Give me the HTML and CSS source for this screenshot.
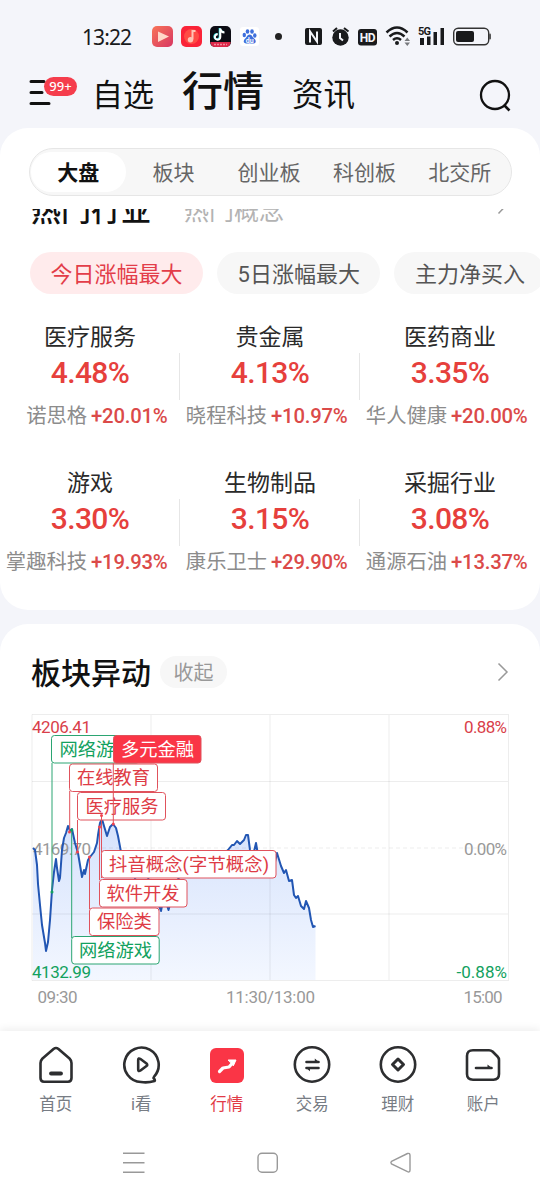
FILE: index.html
```html
<!DOCTYPE html>
<html lang="zh-CN">
<head>
    <meta charset="UTF-8">
    <meta name="viewport" content="width=device-width, initial-scale=1.0">
    <title>行情</title>
    <link rel="stylesheet" href="styles.css">
</head>
<body>
    <div class="status-bar">
        <span class="clock">13:22</span>
        <svg class="app-icons" width="130" height="24" viewBox="152 25 130 24">
            <defs>
                <linearGradient id="play-bg" x1="0" y1="0" x2="1" y2="1">
                    <stop offset="0" stop-color="#f87558"/>
                    <stop offset="1" stop-color="#d73662"/>
                </linearGradient>
            </defs>
            <rect x="152" y="26" width="21" height="21" rx="5" fill="url(#play-bg)"/>
            <path d="M158 31.5 L169 36.5 L158 42 Z" fill="#ffd8c9"/>
            <rect x="181" y="26" width="21" height="21" rx="5" fill="#fa2338"/>
            <circle cx="191.500" cy="36.500" r="7.500" fill="#ff4b45"/>
            <path d="M195.500 31 H192.500 V39.500" fill="none" stroke="#ffc3b5" stroke-width="2"/>
            <circle cx="190.500" cy="39.800" r="2.700" fill="#ffc3b5"/>
            <rect x="210" y="26" width="21" height="21" rx="5" fill="#0c0c14"/>
            <path d="M210.300 42 H230.700 Q230 47 226 47 H215 Q211 47 210.300 42" fill="#dc2749"/>
            <path d="M214 44.500 H227" stroke="#f08c9c" stroke-width="1.500" stroke-dasharray="2 1"/>
            <path d="M220.300 28.500 V37 A2.700 2.700 0 1 1 217.800 34.300 M220.300 29 Q221 32.300 224.500 32.500" fill="none" stroke="#35e3e3" stroke-width="2" transform="translate(-.6 -.4)"/>
            <path d="M220.300 28.500 V37 A2.700 2.700 0 1 1 217.800 34.300 M220.300 29 Q221 32.300 224.500 32.500" fill="none" stroke="#fff" stroke-width="2"/>
            <rect x="240" y="27" width="19" height="19" rx="3" fill="#fff"/>
            <g fill="#3f70dc">
                <ellipse cx="244.300" cy="35" rx="1.700" ry="2.300"/>
                <ellipse cx="247.500" cy="31.500" rx="1.800" ry="2.300"/>
                <ellipse cx="252" cy="31.500" rx="1.800" ry="2.300"/>
                <ellipse cx="254.800" cy="35.500" rx="1.700" ry="2.300"/>
                <path d="M249.700 34.500 C252 34.500 252.500 37.500 255 39.300 C257.500 43.500 253 44 249.700 43.300 C246 44 242 43.300 244.500 39.300 C247 37.500 247 34.500 249.700 34.500"/>
            </g>
            <text x="249.700" y="42.500" class="paw-text">du</text>
            <circle cx="278.500" cy="36.500" r="3.500" fill="#222"/>
        </svg>
        <svg class="system-icons" width="188" height="26" viewBox="304 23 188 26">
            <g fill="#191a1c">
                <rect x="305" y="28" width="17" height="17" rx="2"/>
                <circle cx="340.500" cy="37.500" r="8.200"/>
                <rect x="358" y="29" width="19" height="16.500" rx="3"/>
                <circle cx="397" cy="43" r="2"/>
                <rect x="420" y="38" width="4" height="7"/>
                <rect x="427" y="36.500" width="3.500" height="8.500"/>
                <rect x="433.500" y="32" width="3.500" height="13"/>
                <rect x="440.500" y="28" width="3.500" height="17"/>
                <rect x="456" y="31" width="18" height="11" rx="2"/>
            </g>
            <path d="M310 42.500 V31.500 L317 41.500 V31.500" fill="none" stroke="#f4f5fa" stroke-width="2"/>
            <path d="M340 33 V38 L343 40.500" fill="none" stroke="#f4f5fa" stroke-width="2"/>
            <path d="M333 31.500 L337 28 M344 28 L348.500 31.500" stroke="#191a1c" stroke-width="2"/>
            <text x="367.500" y="41.500" class="hd-text">HD</text>
            <path d="M386.500 32.500 Q397 22.500 407.500 32.500 M389.500 36.500 Q397 29.500 404.500 36.500 M393 40 Q397 36.500 401 40" fill="none" stroke="#191a1c" stroke-width="2.500"/>
            <path d="M404.500 41 L407.300 37.500 L410 41 Z M404.500 42.500 L407.300 46 L410 42.500 Z" fill="#77797d"/>
            <text x="418" y="35" class="net-text">5G</text>
            <rect x="453.700" y="28.200" width="35" height="16.500" rx="4.500" fill="none" stroke="#333" stroke-width="1.400"/>
            <rect x="489" y="33.500" width="2" height="6" rx="1" fill="#555"/>
        </svg>
    </div>

    <header class="top-nav">
        <div class="menu">
            <svg width="24" height="28" viewBox="0 0 24 28">
                <path d="M2 3.500 H15 M2 14.500 H13 M2 25.500 H20" stroke="#111" stroke-width="3" stroke-linecap="round"/>
            </svg>
            <span class="badge">99+</span>
        </div>
        <a class="nav-link">自选</a>
        <a class="nav-link current">行情</a>
        <a class="nav-link last">资讯</a>
        <svg class="search" width="34" height="34" viewBox="0 0 34 34">
            <circle cx="17" cy="16" r="14" fill="none" stroke="#111" stroke-width="2.300"/>
            <path d="M26.500 26.500 L31.500 31.500" stroke="#111" stroke-width="2.600"/>
        </svg>
    </header>

    <section class="card market">
        <div class="segments">
            <span class="segment active">大盘</span>
            <span class="segment">板块</span>
            <span class="segment">创业板</span>
            <span class="segment">科创板</span>
            <span class="segment">北交所</span>
        </div>

        <div class="scrolled-head">
            <span class="hot">热门行业</span>
            <span class="hot-other">热门概念</span>
            <svg class="head-arrow" width="12" height="20" viewBox="0 0 12 20">
                <path d="M1.500 1.500 L9.500 10 L1.500 18.500" fill="none" stroke="#999" stroke-width="1.500"/>
            </svg>
        </div>

        <div class="filters">
            <span class="filter active">今日涨幅最大</span>
            <span class="filter">5日涨幅最大</span>
            <span class="filter">主力净买入</span>
        </div>

        <div class="sectors">
            <div class="sector">
                <div class="name">医疗服务</div>
                <div class="percent">4.48%</div>
                <div class="leader"><span>诺思格</span><b>+20.01%</b></div>
            </div>
            <div class="sector">
                <div class="name">贵金属</div>
                <div class="percent">4.13%</div>
                <div class="leader"><span>晓程科技</span><b>+10.97%</b></div>
            </div>
            <div class="sector">
                <div class="name">医药商业</div>
                <div class="percent">3.35%</div>
                <div class="leader"><span>华人健康</span><b>+20.00%</b></div>
            </div>
            <div class="sector">
                <div class="name">游戏</div>
                <div class="percent">3.30%</div>
                <div class="leader"><span>掌趣科技</span><b>+19.93%</b></div>
            </div>
            <div class="sector">
                <div class="name">生物制品</div>
                <div class="percent">3.15%</div>
                <div class="leader"><span>康乐卫士</span><b>+29.90%</b></div>
            </div>
            <div class="sector">
                <div class="name">采掘行业</div>
                <div class="percent">3.08%</div>
                <div class="leader"><span>通源石油</span><b>+13.37%</b></div>
            </div>
        </div>
    </section>

    <section class="card moves">
        <div class="moves-head">
            <h2>板块异动</h2>
            <span class="fold">收起</span>
            <svg class="head-arrow" width="12" height="20" viewBox="0 0 12 20">
                <path d="M1.500 1.500 L10 10 L1.500 18.500" fill="none" stroke="#999" stroke-width="1.500"/>
            </svg>
        </div>
        <svg class="chart" width="540" height="300" viewBox="0 710 540 300">
            <defs>
                <linearGradient id="area" x1="0" y1="0" x2="0" y2="1">
                    <stop offset="0" stop-color="#d5e2fc"/>
                    <stop offset="1" stop-color="#f3f7ff"/>
                </linearGradient>
            </defs>
            <path fill="url(#area)" d="M33 848 L35 850 L37 865 L38 884 L40 905 L42 925 L45 943 L46 951 L48 942 L50 920 L52 890 L54 872 L56 859 L57 868 L59 881 L60 878 L62 850 L64 838 L66 833 L68 826 L70 831 L72 829 L75 843 L78 853 L80 865 L82 877 L84 870 L85 874 L88 860 L90 857 L94 852 L97 843 L98 835 L100 823 L102 819 L104 826 L107 836 L110 827 L113 824 L116 828 L118 836 L121 852 L135 878 L145 870 L161 911 L164 895 L168.500 910 L175 885 L193 851 L210 865 L228 850 L232 845 L234 845 L237 841 L240 844 L244 840 L246 835 L248 835 L250 850 L252 860 L256 843 L258 855 L265 865 L275 862 L277 853 L281 866 L284 873 L286 870 L289 881 L292 880 L294 895 L296 898 L298 896 L301 906 L304 909 L306 901 L309 908 L311 920 L313 927 L315.500 926 V980 H33 Z"/>
            <g class="grid">
                <path d="M32 714.500 H508.500 V980.500 H32 Z"/>
                <path d="M32 781.500 H508 M32 914 H508 M151 715 V980 M270 715 V980 M389 715 V980"/>
                <path d="M32 848 H508" stroke-dasharray="4 3"/>
            </g>
            <g class="axis">
                <text x="32" y="733" textLength="59" class="up">4206.41</text>
                <text x="33" y="855" textLength="58">4169.70</text>
                <text x="32" y="978" textLength="59" class="down">4132.99</text>
                <text x="464" y="733" textLength="43">0.88%</text>
                <text x="464" y="855" textLength="43">0.00%</text>
                <text x="456.500" y="978" textLength="50.500" class="down">-0.88%</text>
                <text x="37.500" y="1003" textLength="40">09:30</text>
                <text x="226" y="1003" textLength="89">11:30/13:00</text>
                <text x="463.500" y="1003" textLength="39">15:00</text>
            </g>
            <path class="index-line" d="M33 848 L35 850 L37 865 L38 884 L40 905 L42 925 L45 943 L46 951 L48 942 L50 920 L52 890 L54 872 L56 859 L57 868 L59 881 L60 878 L62 850 L64 838 L66 833 L68 826 L70 831 L72 829 L75 843 L78 853 L80 865 L82 877 L84 870 L85 874 L88 860 L90 857 L94 852 L97 843 L98 835 L100 823 L102 819 L104 826 L107 836 L110 827 L113 824 L116 828 L118 836 L121 852 L135 878 L145 870 L161 911 L164 895 L168.500 910 L175 885 L193 851 L210 865 L228 850 L232 845 L234 845 L237 841 L240 844 L244 840 L246 835 L248 835 L250 850 L252 860 L256 843 L258 855 L265 865 L275 862 L277 853 L281 866 L284 873 L286 870 L289 881 L292 880 L294 895 L296 898 L298 896 L301 906 L304 909 L306 901 L309 908 L311 920 L313 927 L315.500 926"/>

            <!-- sector tags, drawn back to front -->
            <g class="tag fall">
                <path d="M52 763 V892"/>
                <rect x="51.500" y="735.500" width="88" height="27.500" rx="3"/>
                <text x="59.500" y="755.500">网络游戏</text>
            </g>
            <g class="tag rise">
                <path d="M69.700 791 V832"/>
                <rect x="69.500" y="764" width="88" height="27.500" rx="3"/>
                <text x="77" y="784">在线教育</text>
            </g>
            <g class="tag rise">
                <path d="M77.500 820 V852"/>
                <rect x="77.500" y="792.500" width="88" height="27.500" rx="3"/>
                <text x="85.500" y="812.500">医疗服务</text>
            </g>
            <g class="tag rise">
                <path d="M101.500 878 V815"/>
                <rect x="101.500" y="850.500" width="174.500" height="27.500" rx="3"/>
                <text x="109" y="871" textLength="160">抖音概念(字节概念)</text>
            </g>
            <g class="tag rise">
                <path d="M99.500 880 V827"/>
                <rect x="99.500" y="879.500" width="87.500" height="27.500" rx="3"/>
                <text x="106.500" y="899.500">软件开发</text>
            </g>
            <g class="tag rise">
                <path d="M89.500 909 V857"/>
                <rect x="89.500" y="908" width="69.500" height="27.500" rx="3"/>
                <text x="97" y="928">保险类</text>
            </g>
            <g class="tag fall">
                <path d="M71.700 938 V830"/>
                <rect x="71.700" y="936.500" width="87.500" height="27.500" rx="3"/>
                <text x="79" y="956.500">网络游戏</text>
            </g>
            <g class="tag solid">
                <path d="M113.300 763 V825"/>
                <rect x="113.500" y="735.500" width="87.500" height="27.500" rx="3"/>
                <text x="121" y="755.500">多元金融</text>
            </g>
            <g fill="#f2444f">
                <circle cx="69.500" cy="832" r="1.500"/>
                <circle cx="77.500" cy="852" r="1.500"/>
                <circle cx="89.500" cy="857" r="1.500"/>
                <circle cx="99.500" cy="827" r="1.500"/>
                <circle cx="101.500" cy="815.500" r="1.500"/>
                <circle cx="113.300" cy="824" r="1.500"/>
            </g>
            <g fill="#12a15e">
                <circle cx="52" cy="892" r="1.500"/>
                <circle cx="71.700" cy="830" r="1.500"/>
            </g>
        </svg>
    </section>

    <footer class="bottom">
        <nav class="tabs">
            <a class="tab">
                <svg width="40" height="40" viewBox="0 0 40 40">
                    <path d="M17.500 4 Q20 2 22.500 4 L33.500 13.500 Q35.500 15.500 35.500 18 V33 Q35.500 36.700 32 36.700 H8 Q4.500 36.700 4.500 33 V18 Q4.500 15.500 6.500 13.500 Z"/>
                    <path d="M15 28.500 H25" stroke-width="3.800"/>
                </svg>
                首页
            </a>
            <a class="tab">
                <svg width="40" height="40" viewBox="0 0 40 40">
                    <path d="M33.300 31.300 A17.200 17.200 0 1 0 20 37 Q27 38 33.500 36 Q34.500 35 32.500 33 Z"/>
                    <path d="M17.200 15 Q17.200 12.500 19.500 14 L25.500 18.500 Q27 20 25.500 21 L19.500 25.500 Q17.200 27 17.200 24.500 Z"/>
                </svg>
                i看
            </a>
            <a class="tab active">
                <svg width="40" height="40" viewBox="0 0 40 40">
                    <rect x="3" y="3" width="34" height="35" rx="6" fill="#fa3546" stroke="none"/>
                    <path d="M12.500 26.500 L16 23 L22 22 L26 17.500" stroke="#fff" stroke-width="3.200"/>
                    <path d="M21.500 15 L29 15 L26.500 20.500 Z" fill="#fff" stroke="#fff" stroke-width="1"/>
                </svg>
                行情
            </a>
            <a class="tab">
                <svg width="40" height="40" viewBox="0 0 40 40">
                    <circle cx="20" cy="19.500" r="17.200"/>
                    <path d="M14.500 17 H26.500 M14.500 23 H26.500" stroke-width="2.600"/>
                    <path d="M22.800 13.500 L27.500 17.500 H22.800 Z M18 26.300 L13.500 22.500 H18 Z" fill="#2d2e30" stroke="none"/>
                </svg>
                交易
            </a>
            <a class="tab">
                <svg width="40" height="40" viewBox="0 0 40 40">
                    <circle cx="20" cy="19.500" r="17.200"/>
                    <path d="M20 14 L25.500 19.500 L20 25 L14.500 19.500 Z" stroke-width="3"/>
                </svg>
                理财
            </a>
            <a class="tab">
                <svg width="40" height="40" viewBox="0 0 40 40">
                    <path d="M10 5.200 H26 Q28 5.200 29.500 6.500 L34.500 11.500 Q36 13 36 15 V29 Q36 34.700 30.500 34.700 H10 Q4 34.700 4 29 V11 Q4 5.200 10 5.200"/>
                    <path d="M13 23 H28.500" stroke-width="2.600"/>
                    <path d="M24.500 19.500 L29.500 23.500 H24.500 Z" fill="#2d2e30" stroke="none"/>
                </svg>
                账户
            </a>
        </nav>
        <svg class="system-nav" width="290" height="24" viewBox="122 1151 290 24">
            <path d="M123 1153.300 H144.500 M123 1162.700 H144.500 M123 1172.200 H144.500"/>
            <rect x="258" y="1153.300" width="19.300" height="19" rx="4"/>
            <path d="M391.500 1161.300 L407.500 1153.500 Q410 1152.800 410 1155.500 V1170 Q410 1172.700 407.500 1171.700 L391.500 1164 Q390.300 1162.500 391.500 1161.300 Z"/>
        </svg>
    </footer>
</body>
</html>
```
FILE: styles.css
```css
* {
    box-sizing: border-box;
}
body {
    margin: 0;
    width: 540px;
    height: 1200px;
    overflow: hidden;
    display: flex;
    flex-direction: column;
    background: #f4f5fa;
    color: #111;
    font-family: Roboto, "Noto Sans CJK SC", sans-serif;
}
svg {
    display: block;
    flex: none;
}
.status-bar {
    height: 62px;
    display: flex;
    align-items: center;
    padding: 12px 0 0 82px;
}
.clock {
    width: 70px;
    font: 21px/24px "Noto Sans", sans-serif;
    letter-spacing: -0.9px;
    color: #191a1c;
}
.system-icons {
    margin: -2px 0 0 22px;
}
.paw-text {
    font: bold 7px Roboto, sans-serif;
    fill: #fff;
    text-anchor: middle;
}
.hd-text {
    font: bold 12px Roboto, sans-serif;
    letter-spacing: -0.5px;
    fill: #f4f5fa;
    text-anchor: middle;
}
.net-text {
    font: bold 11px Roboto, sans-serif;
    letter-spacing: -0.8px;
    fill: #191a1c;
}

/* top navigation */
.top-nav {
    height: 66px;
    display: flex;
    align-items: center;
    padding: 2px 28px 0 29px;
}
.menu {
    position: relative;
    width: 63px;
    margin-top: -9px;
}
.badge {
    position: absolute;
    left: 15px;
    top: -1px;
    width: 33px;
    height: 19px;
    border-radius: 10px;
    background: #f53d4c;
    color: #fff;
    font: 500 13px/19px "Noto Sans", sans-serif;
    text-align: center;
}
.nav-link {
    font-size: 31px;
    line-height: 40px;
    margin-right: 28px;
}
.nav-link.current {
    font-size: 41px;
    font-weight: 500;
    line-height: 60px;
    margin-top: -8px;
}
.nav-link.last {
    margin-right: auto;
    font-size: 31.5px;
}

.card {
    background: #fff;
    border-radius: 28px;
}
.market {
    height: 482px;
    margin-bottom: 14px;
    padding-top: 20px;
    overflow: hidden;
}
.segments {
    width: 483px;
    height: 48px;
    margin: 0 auto 0 28.5px;
    padding: 3px 3px 3px 1px;
    display: flex;
    border: 1px solid #e6e6e6;
    border-radius: 24px;
    background: #f7f7f7;
}
.segment {
    flex: 1;
    padding-top: 1.5px;
    font-size: 21px;
    line-height: 39px;
    text-align: center;
    color: #666;
}
.segment.active {
    border-radius: 20px;
    background: #fff;
    color: #111;
    font-weight: 700;
}
.scrolled-head {
    height: 20px;
    margin-top: 13px;
    padding: 0 31px 0 31px;
    display: flex;
    align-items: flex-start;
    overflow: hidden;
}
.hot {
    margin: -18px 33px 0 0;
    font-size: 30px;
    font-weight: 500;
    line-height: 40px;
}
.hot-other {
    margin-top: -17px;
    font-size: 25px;
    line-height: 40px;
    color: #b3b3b3;
}
.head-arrow {
    margin-left: auto;
}
.scrolled-head .head-arrow {
    margin-top: -14px;
}
.filters {
    display: flex;
    gap: 14px;
    margin: 23px 0 0 30px;
}
.filter {
    flex: none;
    height: 42px;
    padding: 1.5px 20.5px 0;
    border-radius: 21px;
    background: #f7f7f7;
    color: #555;
    font-size: 22px;
    line-height: 42px;
}
.filter.active {
    background: #ffebec;
    color: #e33d49;
}

/* sector grid */
.sectors {
    display: grid;
    grid-template-columns: repeat(3, 180px);
    row-gap: 36px;
    margin-top: 25px;
}
.sector {
    height: 110px;
    padding-top: 2px;
    text-align: center;
    background: linear-gradient(#e6e6e6, #e6e6e6) right 34px / 1px 47px no-repeat;
}
.sector:nth-child(3n) {
    background: none;
}
.name {
    font-size: 23px;
    line-height: 34px;
    color: #2a2a2a;
}
.percent {
    margin-top: -2px;
    font-size: 30px;
    font-weight: 500;
    line-height: 40px;
    letter-spacing: -0.6px;
    color: #e6403c;
}
.leader {
    display: grid;
    grid-template-columns: 88px 88px;
    column-gap: 4px;
    margin: 5px 0 0 -1px;
    font-size: 20.3px;
    line-height: 36px;
}
.leader span {
    display: flex;
    justify-content: flex-end;
    white-space: nowrap;
    color: #8c8c8c;
}
.leader b {
    text-align: left;
    font-weight: 500;
    letter-spacing: -0.2px;
    color: #db4a49;
}

/* sector moves chart */
.moves {
    height: 407px;
    border-radius: 28px 28px 0 0;
}
.moves-head {
    display: flex;
    align-items: center;
    height: 86px;
    padding: 10px 31px 0 31px;
}
h2 {
    margin: 3px 9px 0 0;
    font-size: 30px;
    font-weight: 500;
    line-height: 40px;
}
.fold {
    width: 67px;
    height: 32px;
    padding-top: 1px;
    border-radius: 16px;
    background: #f7f7f7;
    color: #999;
    font-size: 20px;
    line-height: 32px;
    text-align: center;
}
.grid path {
    fill: none;
    stroke: #000;
    stroke-opacity: 0.07;
}
.axis text {
    font-size: 17px;
    fill: #999;
}
.axis .up,
.axis text:nth-child(4) {
    fill: #d93f4a;
}
.axis .down {
    fill: #12a15e;
}
.index-line {
    fill: none;
    stroke: #2256b3;
    stroke-width: 2;
    stroke-linejoin: round;
}
.tag text {
    font-size: 18.3px;
}
.tag rect {
    fill: #fff;
}
.tag path {
    fill: none;
}
.rise path,
.rise rect {
    stroke: #e0525c;
}
.rise text {
    fill: #de3b45;
}
.fall path,
.fall rect {
    stroke: #2ba572;
}
.fall text {
    fill: #12a15e;
}
.solid path,
.solid rect {
    stroke: #e0525c;
}
.solid rect {
    fill: #fa3546;
}
.solid text {
    fill: #fff;
}

/* bottom bar */
.bottom {
    position: relative;
    height: 169px;
    background: #fff;
    box-shadow: 0 -2px 8px rgba(0, 0, 0, 0.07);
}
.tabs {
    display: flex;
    padding: 14px 14px 0 13px;
}
.tab {
    flex: 1;
    display: flex;
    flex-direction: column;
    align-items: center;
    font-size: 16.5px;
    line-height: 36px;
    color: #777c84;
}
.tab svg {
    margin-bottom: 2px;
    fill: none;
    stroke: #2d2e30;
    stroke-width: 2.6;
    stroke-linecap: round;
    stroke-linejoin: round;
}
.tab.active {
    color: #e23b47;
}
.system-nav {
    margin: 28px 0 0 122px;
    fill: none;
    stroke: #999;
    stroke-width: 1.4;
}
```
